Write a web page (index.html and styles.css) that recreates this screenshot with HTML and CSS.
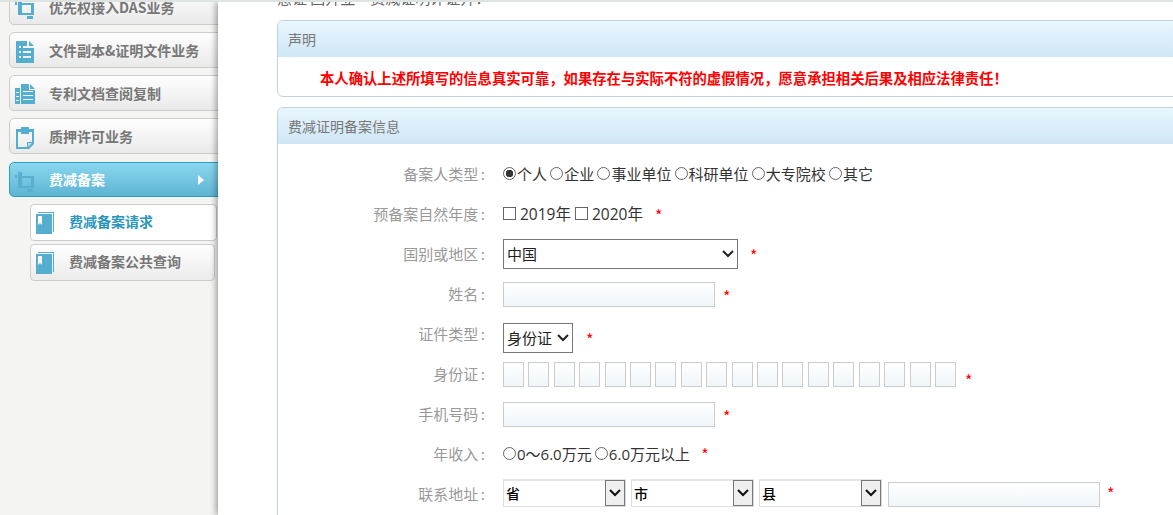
FILE: index.html
```html
<!DOCTYPE html>
<html lang="zh-CN">
<head>
<meta charset="utf-8">
<title>费减备案</title>
<link rel="stylesheet" href="styles.css">
</head>
<body>
<svg class="defs" width="0" height="0" aria-hidden="true">
  <symbol id="i-crop" viewBox="0 0 20 20"><path d="M0 3h2v3H0zM3 0h4v4h12v12H3zM7 6v8h9V6zM12 17h6v3h-6z" fill-rule="evenodd"/></symbol>
  <symbol id="i-doc" viewBox="0 0 18 22"><path fill-rule="evenodd" d="M0 0h11v7h7v15H0zM3 5v2h2V5zm4 0v2h4V5zM3 10v2h2v-2zm4 0v2h8v-2zM3 15v2h2v-2zm4 0v2h8v-2z"/><path d="M13 0l5 5h-5z"/></symbol>
  <symbol id="i-docs" viewBox="0 0 20 20"><path fill-rule="evenodd" d="M0 4h5v16H0zM1 8v1h3V8zm0 4v1h3v-1zm0 4v1h3v-1z"/><path fill-rule="evenodd" d="M6 0h8v6h6v14H6zM8 7v1h10V7zm0 4v1h10v-1zm0 4v1h10v-1z"/><path d="M15 0l5 5h-5z"/></symbol>
  <symbol id="i-clip" viewBox="0 0 18 22"><path fill-rule="evenodd" d="M0 2h5V0h8v2h5v15l-5 5H0zM2 5v15h9v-5h5V5h-3v2H5V5z"/><path class="fold" d="M12 16h4l-4 4z"/></symbol>
  <symbol id="i-book" viewBox="0 0 18 22"><path d="M2 0h16v20h-1V1H2z"/><path fill-rule="evenodd" d="M0 2h16v20H0zM2 4v9l2-2 2 2V4z"/></symbol>
</svg>
<div class="topline"></div>
<div class="page">
  <aside class="sidebar">
    <ul class="nav">
      <li class="nav-item"><svg class="nav-icon"><use href="#i-crop"/></svg>优先权接入DAS业务</li>
      <li class="nav-item"><svg class="nav-icon"><use href="#i-doc"/></svg>文件副本&amp;证明文件业务</li>
      <li class="nav-item"><svg class="nav-icon"><use href="#i-docs"/></svg>专利文档查阅复制</li>
      <li class="nav-item"><svg class="nav-icon"><use href="#i-clip"/></svg>质押许可业务</li>
      <li class="nav-item active"><svg class="nav-icon"><use href="#i-crop"/></svg>费减备案<span class="arrow"></span></li>
    </ul>
    <ul class="subnav">
      <li class="sub-item current"><svg class="sub-icon"><use href="#i-book"/></svg>费减备案请求</li>
      <li class="sub-item"><svg class="sub-icon"><use href="#i-book"/></svg>费减备案公共查询</li>
    </ul>
  </aside>
  <main class="main">
    <p class="clipped">恳证 国开立一费减证明评证开：</p>
    <section class="panel statement">
      <h2 class="panel-title">声明</h2>
      <p class="declare">本人确认上述所填写的信息真实可靠，如果存在与实际不符的虚假情况，愿意承担相关后果及相应法律责任！</p>
    </section>
    <section class="panel info">
      <h2 class="panel-title">费减证明备案信息</h2>
      <form class="form">
        <div class="row">
          <label class="label">备案人类型<span class="colon">:</span></label>
          <div class="field">
            <input class="radio" type="radio" name="t" checked><span class="opt">个人</span>
            <input class="radio" type="radio" name="t"><span class="opt">企业</span>
            <input class="radio" type="radio" name="t"><span class="opt">事业单位</span>
            <input class="radio" type="radio" name="t"><span class="opt">科研单位</span>
            <input class="radio" type="radio" name="t"><span class="opt">大专院校</span>
            <input class="radio" type="radio" name="t"><span class="opt">其它</span>
          </div>
        </div>
        <div class="row">
          <label class="label">预备案自然年度<span class="colon">:</span></label>
          <div class="field">
            <input class="check" type="checkbox"><span class="year">2019年</span>
            <input class="check" type="checkbox"><span class="year">2020年</span>
            <span class="star star-year">*</span>
          </div>
        </div>
        <div class="row">
          <label class="label">国别或地区<span class="colon">:</span></label>
          <div class="field">
            <select class="sel sel-country"><option>中国</option></select>
            <span class="star star-country">*</span>
          </div>
        </div>
        <div class="row">
          <label class="label">姓名<span class="colon">:</span></label>
          <div class="field">
            <input class="text" type="text"><span class="star star-text">*</span>
          </div>
        </div>
        <div class="row row-cert">
          <label class="label">证件类型<span class="colon">:</span></label>
          <div class="field">
            <select class="sel sel-cert"><option>身份证</option></select>
            <span class="star star-cert">*</span>
          </div>
        </div>
        <div class="row row-id">
          <label class="label">身份证<span class="colon">:</span></label>
          <div class="field">
            <div class="cells">
              <input class="cell" type="text"><input class="cell" type="text"><input class="cell" type="text"><input class="cell" type="text"><input class="cell" type="text"><input class="cell" type="text"><input class="cell" type="text"><input class="cell" type="text"><input class="cell" type="text"><input class="cell" type="text"><input class="cell" type="text"><input class="cell" type="text"><input class="cell" type="text"><input class="cell" type="text"><input class="cell" type="text"><input class="cell" type="text"><input class="cell" type="text"><input class="cell" type="text">
            </div>
            <span class="star star-id">*</span>
          </div>
        </div>
        <div class="row">
          <label class="label">手机号码<span class="colon">:</span></label>
          <div class="field">
            <input class="text" type="text"><span class="star star-text">*</span>
          </div>
        </div>
        <div class="row">
          <label class="label">年收入<span class="colon">:</span></label>
          <div class="field">
            <input class="radio" type="radio" name="i"><span class="opt opt-num">0～6.0万元</span>
            <input class="radio" type="radio" name="i"><span class="opt opt-num">6.0万元以上</span>
            <span class="star star-income">*</span>
          </div>
        </div>
        <div class="row">
          <label class="label">联系地址<span class="colon">:</span></label>
          <div class="field field-addr">
            <div class="fake-select"><span class="fake-value">省</span><span class="fake-btn"><svg class="chev" viewBox="0 0 12 8"><path d="M1 1l5 5 5-5"/></svg></span></div>
            <div class="fake-select"><span class="fake-value">市</span><span class="fake-btn"><svg class="chev" viewBox="0 0 12 8"><path d="M1 1l5 5 5-5"/></svg></span></div>
            <div class="fake-select"><span class="fake-value">县</span><span class="fake-btn"><svg class="chev" viewBox="0 0 12 8"><path d="M1 1l5 5 5-5"/></svg></span></div>
            <input class="text text-addr" type="text"><span class="star star-addr">*</span>
          </div>
        </div>
      </form>
    </section>
  </main>
</div>
</body>
</html>
```
FILE: styles.css
```css
* { box-sizing: border-box; }
html, body { margin: 0; height: 100%; overflow: hidden; }
body { font-family: "Noto Sans CJK SC", "Open Sans", sans-serif; font-size: 14px; color: #333; background: #fff; }
.defs { position: absolute; }
.topline { height: 2px; background: #dfe3e1; }
.page { display: flex; height: 513px; overflow: hidden; }

.sidebar { width: 218px; flex: none; background: #f4f4f2; overflow: hidden; padding-left: 9px; }
.nav, .subnav { list-style: none; margin: 0; padding: 0; }
.nav { margin-top: -13px; width: 220px; display: flex; flex-direction: column; gap: 7px; }
.nav-item { display: flex; align-items: center; height: 36px; padding-left: 39px; padding-bottom: 1px; border: 1px solid #ccc; border-radius: 5px 0 0 5px; background: linear-gradient(#fff, #e9e9e9); color: #777; font-weight: bold; position: relative; line-height: 20px; }
.nav-icon { position: absolute; left: 5px; top: 9px; width: 20px; height: 20px; fill: #55add0; }
.nav-item:nth-child(2) .nav-icon, .nav-item:nth-child(4) .nav-icon { left: 6px; width: 18px; height: 22px; top: 8px; }
.nav-item:nth-child(3) .nav-icon { top: 8px; }
.fold { fill: #bcdcea; }
.nav-item.active { height: 35px; margin-top: 1px; padding-bottom: 2px; border-color: #2aa0c0; background: linear-gradient(#8ad7f0, #5eb4d2); color: #fff; }
.nav-item.active .nav-icon { fill: #5aaed0; }
.arrow { position: absolute; left: 188px; top: 12px; width: 0; height: 0; border-left: 6px solid #fff; border-top: 5px solid transparent; border-bottom: 5px solid transparent; }
.subnav { margin: 7px 0 0 21px; display: flex; flex-direction: column; gap: 3px; }
.sub-item { display: flex; align-items: center; height: 37px; padding-left: 38px; padding-bottom: 4px; border: 1px solid #ccc; border-radius: 4px; background: linear-gradient(#fff, #ebebeb); color: #777; font-weight: bold; position: relative; width: 185px; }
.sub-item.current { background: #fff; color: #2a96bb; width: 187px; }
.sub-icon { position: absolute; left: 5px; top: 7px; width: 18px; height: 22px; fill: #55add0; }

.main { flex: 1; min-width: 0; background: #fff; overflow: hidden; padding-left: 59px; box-shadow: -2px 0 6px rgba(0,0,0,.35); position: relative; }
.clipped { margin: -14px 0 0; height: 32px; line-height: 20px; font-size: 15px; color: #666; white-space: nowrap; }
.panel { width: 920px; border: 1px solid #bed2e2; border-radius: 6px 0 0 6px; overflow: hidden; }
.panel-title { margin: 0; height: 36px; padding-left: 10px; line-height: 36px; font-size: 14px; font-weight: normal; color: #777; background: linear-gradient(#e9f6fd, #cfe6f6); }
.statement { height: 77px; }
.declare { margin: 0; padding-left: 42px; height: 39px; line-height: 42px; font-size: 14.33px; font-weight: bold; color: #f00; white-space: nowrap; }
.info { margin-top: 10px; height: 560px; border-bottom: 0; }
.form { padding-top: 9px; font-size: 15px; }

.row { display: flex; height: 40px; align-items: center; }
.label { width: 207px; flex: none; text-align: right; color: #999; white-space: nowrap; }
.colon { margin-left: 2.5px; }
.field { display: flex; align-items: center; margin-left: 18px; white-space: nowrap; }

.radio { appearance: none; width: 13px; height: 13px; margin: 0 1px 0 0; border: 1px solid #666; border-radius: 50%; background: #fff; flex: none; }
.radio:checked { background: radial-gradient(circle, #333 0 3.5px, #fff 4px); }
.opt { margin-right: 3.2px; }
.opt-num { font-family: "Open Sans", "Noto Sans CJK SC", sans-serif; }
.check { appearance: none; width: 13px; height: 13px; margin: 0 4px 0 0; border: 1px solid #666; background: #fff; flex: none; }
.year { font-family: "Open Sans", "Noto Sans CJK SC", sans-serif; font-size: 15.5px; margin-right: 4px; }
.star { color: #f00; font-size: 16px; line-height: 14px; }
.star-year { margin-left: 8px; margin-top: 4px; }
.star-country { margin-left: 12px; margin-top: 4px; }
.star-text { margin-left: 8px; margin-top: 5px; }
.star-cert { margin-left: 13px; margin-top: 2px; }
.star-id { margin-left: 9px; margin-top: 14px; }
.star-income { margin-left: 8px; margin-top: 2px; }
.star-addr { margin-left: 2px; }

.sel { appearance: none; font: inherit; color: #222; background: #fff url("data:image/svg+xml,%3Csvg xmlns='http://www.w3.org/2000/svg' width='12' height='8' viewBox='0 0 12 8'%3E%3Cpath d='M1 1l5 5 5-5' fill='none' stroke='%23222' stroke-width='2'/%3E%3C/svg%3E") no-repeat right 3px center; border: 1px solid #767676; border-radius: 0; padding: 0 0 1px 3px; height: 30px; margin-top: 2px; }
.sel-country { width: 235px; }
.sel-cert { width: 70px; }
.row-cert .field { margin-top: 10px; }
.row-cert .sel { margin-top: 0; }

.text { width: 212px; height: 25px; border: 1px solid #ccc; background: linear-gradient(#fff, #f0f6fa); padding: 0; margin-top: 2px; }
.cells { display: flex; gap: 4.41px; margin-top: 2px; }
.cell { width: 21px; height: 25px; border: 1px solid #ccc; background: linear-gradient(#fff, #f0f6fa); padding: 0; }

.field-addr { gap: 5px; font-size: 14px; }
.fake-select { display: flex; justify-content: space-between; width: 123px; height: 28px; border: 1px solid #ddd; border-top: 2px solid #e4e4e4; background: #fff; }
.fake-value { padding-left: 2px; line-height: 24px; color: #000; font-weight: 500; }
.fake-btn { width: 20px; height: 26px; margin-top: -1px; border: 1px solid #777; background: #efefef; display: flex; align-items: center; justify-content: center; flex: none; }
.chev { width: 12px; height: 8px; fill: none; stroke: #111; stroke-width: 2; }
.text-addr { margin-left: 1px; }
```
